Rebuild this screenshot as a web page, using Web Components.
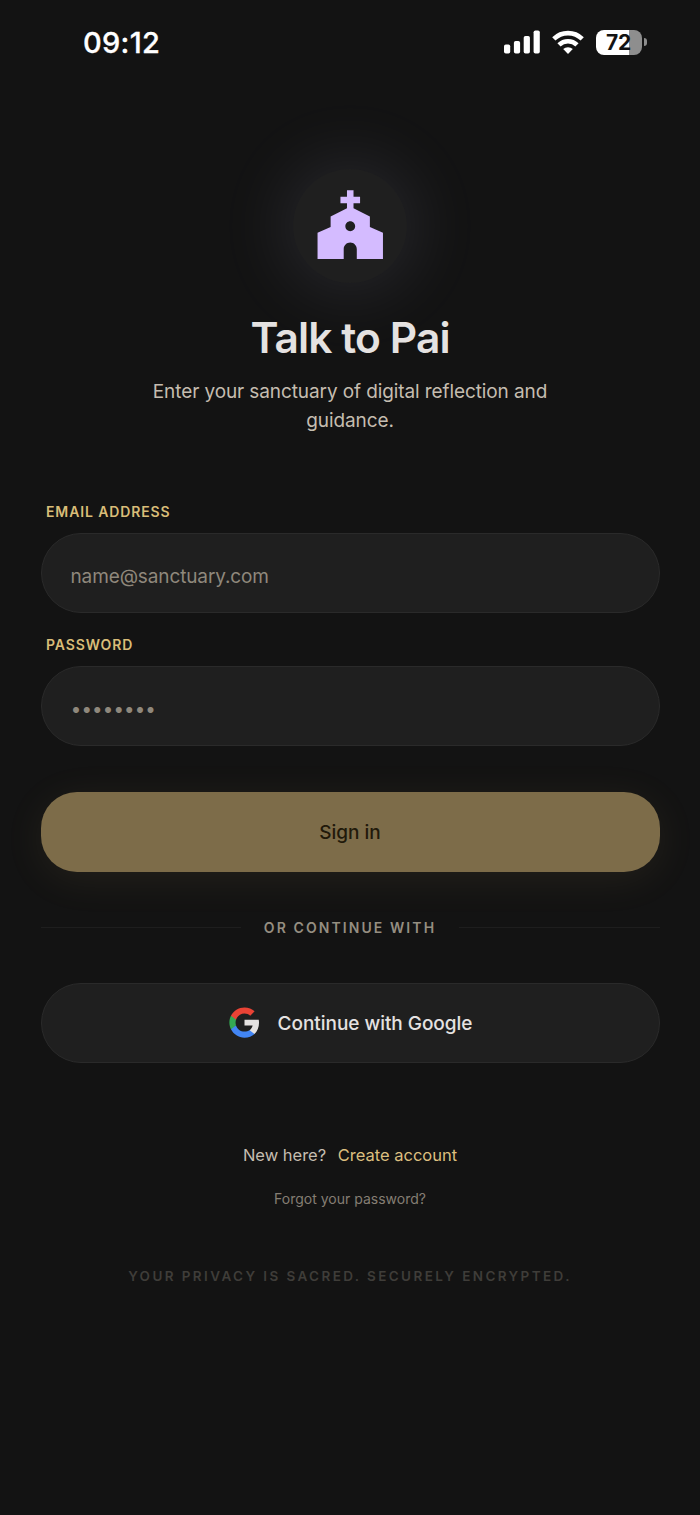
<!DOCTYPE html>
<html lang="en">
<head>
<meta charset="utf-8">
<title>Talk to Pai</title>
<style>
  html, body {
    margin: 0;
    background: #131313;
  }
</style>
</head>
<body>
<sign-in-page></sign-in-page>

<script>
class StatusBar extends HTMLElement {
  constructor() {
    super();
    this.attachShadow({ mode: 'open' });
  }

  connectedCallback() {
    const time = this.getAttribute('time') || '';
    const battery = this.getAttribute('battery') || '100';

    this.shadowRoot.innerHTML = `
      <style>
        :host {
          display: flex;
          justify-content: space-between;
          align-items: center;
          height: 84px;
          padding: 0 53px 0 83px;
          box-sizing: border-box;
          color: #fff;
        }
        .time {
          font-size: 29px;
          font-weight: 500;
          -webkit-text-stroke: 0.3px #fff;
          letter-spacing: 0.3px;
        }
        .icons {
          display: flex;
          align-items: center;
          gap: 12px;
        }
        svg {
          display: block;
        }
        .battery {
          display: flex;
          align-items: center;
          gap: 2px;
        }
        .cell {
          width: 46px;
          height: 25px;
          border-radius: 8px;
          background: linear-gradient(to right, #fff 72%, #8e8e8e 72%);
          color: #131313;
          font-size: 21px;
          font-weight: 700;
          line-height: 25px;
          text-align: center;
          text-indent: -1px;
          letter-spacing: -0.3px;
        }
        .cap {
          width: 3px;
          height: 8px;
          border-radius: 0 3px 3px 0;
          background: #8e8e8e;
        }
      </style>
      <div class="time">${time}</div>
      <div class="icons">
        <svg width="36" height="24" viewBox="0 0 36 24" fill="#fff">
          <rect x="0" y="14.5" width="6.2" height="9" rx="1.8"/>
          <rect x="9.9" y="11" width="6.2" height="12.5" rx="1.8"/>
          <rect x="19.7" y="6" width="6.2" height="17.5" rx="1.8"/>
          <rect x="29.6" y="0.5" width="6.2" height="23" rx="1.8"/>
        </svg>
        <svg width="32" height="24" viewBox="0 0 32 24" fill="none" stroke="#fff" stroke-width="4.6">
          <path d="M1.8 8.9a20.3 20.3 0 0 1 28.4 0"/>
          <path d="M7 14.9a13 13 0 0 1 18 0"/>
          <path d="M16 24l-4.8-4.9a6.9 6.9 0 0 1 9.6 0z" fill="#fff" stroke="none"/>
        </svg>
        <div class="battery">
          <div class="cell">${battery}</div>
          <div class="cap"></div>
        </div>
      </div>
    `;
  }
}

class BrandMark extends HTMLElement {
  constructor() {
    super();
    this.attachShadow({ mode: 'open' });
    this.shadowRoot.innerHTML = `
      <style>
        :host {
          display: flex;
          align-items: center;
          justify-content: center;
          width: 114px;
          height: 114px;
          border-radius: 50%;
          background: #1f1f1f;
          box-shadow: 0 0 72px 8px rgba(205, 210, 255, 0.11);
        }
        svg {
          display: block;
        }
      </style>
      <svg width="78.5" height="78.5" viewBox="0 0 24 24" fill="#d4bbff">
        <path d="M18 12.22V9l-5-2.5V5h2V3h-2V1h-2v2H9v2h2v1.5L6 9v3.22L2 14v8h8v-3c0-1.1.9-2 2-2s2 .9 2 2v3h8v-8l-4-1.78zM12 13.5c-.83 0-1.5-.67-1.5-1.5s.67-1.5 1.5-1.5 1.5.67 1.5 1.5-.67 1.5-1.5 1.5z"/>
      </svg>
    `;
  }
}

class TextField extends HTMLElement {
  constructor() {
    super();
    this.attachShadow({ mode: 'open' });
  }

  connectedCallback() {
    const label = this.getAttribute('label') || '';
    const placeholder = this.getAttribute('placeholder') || '';

    this.shadowRoot.innerHTML = `
      <style>
        :host {
          display: block;
        }
        .label {
          padding-left: 5.5px;
          margin-bottom: 10px;
          color: #d9bd78;
          font-size: 14px;
          font-weight: 600;
          line-height: 22px;
          letter-spacing: 0.88px;
        }
        .box {
          display: flex;
          align-items: center;
          height: 80px;
          padding: var(--field-padding, 7px 29px 0);
          box-sizing: border-box;
          border: 1.5px solid #2a2a2a;
          border-radius: 40px;
          background: #1f1f1f;
          color: #8f887c;
          font-size: 19px;
          font-weight: var(--field-weight, 400);
          letter-spacing: var(--field-spacing, -0.12px);
        }
      </style>
      <div class="label">${label}</div>
      <div class="box"><span>${placeholder}</span></div>
    `;
  }
}

class PillButton extends HTMLElement {
  constructor() {
    super();
    this.attachShadow({ mode: 'open' });
    this.shadowRoot.innerHTML = `
      <style>
        :host {
          display: flex;
          align-items: center;
          justify-content: center;
          gap: 17px;
          height: 80px;
          box-sizing: border-box;
          border: 1.5px solid #2a2a2a;
          border-radius: 40px;
          background: #1f1f1f;
          color: #e5e2e1;
          font-size: 19px;
          font-weight: 500;
          letter-spacing: -0.04px;
        }
        :host([primary]) {
          border: 0;
          border-radius: 36px;
          background: #7d6c49;
          color: #21190a;
          box-shadow: 0 7px 42px rgba(230, 195, 120, 0.08);
        }
        span {
          padding-top: 1px;
        }
      </style>
      <slot name="icon"></slot>
      <span><slot></slot></span>
    `;
  }
}

class GoogleLogo extends HTMLElement {
  constructor() {
    super();
    this.attachShadow({ mode: 'open' });
    this.shadowRoot.innerHTML = `
      <style>
        :host,
        svg {
          display: block;
        }
      </style>
      <svg width="33" height="33" viewBox="0 0 24 24">
        <path fill="#e5e2e1" d="M22.56 12.25c0-.78-.07-1.53-.2-2.25H12v4.26h5.92c-.26 1.37-1.04 2.53-2.21 3.31v2.77h3.57c2.08-1.92 3.28-4.74 3.28-8.09z"/>
        <path fill="#4285f4" d="M12 23c2.97 0 5.46-.98 7.28-2.66l-3.57-2.77c-.98.66-2.23 1.06-3.71 1.06-2.86 0-5.29-1.93-6.16-4.53H2.18v2.84C3.99 20.53 7.7 23 12 23z"/>
        <path fill="#34a853" d="M5.84 14.09c-.22-.66-.35-1.36-.35-2.09s.13-1.43.35-2.09V7.07H2.18C1.43 8.55 1 10.22 1 12s.43 3.45 1.18 4.93l2.85-2.22.81-.62z"/>
        <path fill="#ea4335" d="M12 5.38c1.62 0 3.06.56 4.21 1.64l3.15-3.15C17.45 2.09 14.97 1 12 1 7.7 1 3.99 3.47 2.18 7.07l3.66 2.84c.87-2.6 3.3-4.53 6.16-4.53z"/>
      </svg>
    `;
  }
}

class LabelDivider extends HTMLElement {
  constructor() {
    super();
    this.attachShadow({ mode: 'open' });
    this.shadowRoot.innerHTML = `
      <style>
        :host {
          display: flex;
          align-items: center;
          gap: 23px;
          color: #958e81;
          font-size: 14px;
          font-weight: 600;
          line-height: 22px;
          letter-spacing: 2.08px;
        }
        .line {
          flex: 1;
          height: 1px;
          background: #1e1e1e;
        }
      </style>
      <div class="line"></div>
      <span><slot></slot></span>
      <div class="line"></div>
    `;
  }
}

class SignInPage extends HTMLElement {
  constructor() {
    super();
    this.attachShadow({ mode: 'open' });
    this.shadowRoot.innerHTML = `
      <style>
        :host {
          display: block;
          width: 700px;
          height: 1515px;
          overflow: hidden;
          background: #131313;
          font-family: Inter, "Liberation Sans", sans-serif;
        }
        header {
          display: flex;
          flex-direction: column;
          align-items: center;
          padding-top: 85px;
          text-align: center;
        }
        h1 {
          margin: 28px 0 0;
          color: #e5e2e1;
          font-size: 42.5px;
          font-weight: 600;
          line-height: 54px;
          letter-spacing: -0.9px;
        }
        header p {
          width: 420px;
          margin: 13px 0 0;
          color: #c5bdb0;
          font-size: 19px;
          line-height: 28.5px;
          letter-spacing: -0.1px;
        }
        main {
          display: flex;
          flex-direction: column;
          padding: 0 40.5px;
        }
        .email {
          margin-top: 65.6px;
        }
        .password {
          --field-spacing: 1.65px;
          --field-weight: 700;
          --field-padding: 8px 30px 0;
          margin-top: 21px;
        }
        .submit {
          margin-top: 46px;
        }
        label-divider {
          margin: 45px 0 44px;
        }
        footer {
          display: flex;
          flex-direction: column;
          align-items: center;
        }
        .signup {
          display: flex;
          gap: 11.5px;
          margin-top: 79px;
          color: #c5bdb0;
          font-size: 16.5px;
          line-height: 26px;
        }
        .signup a {
          color: #dcbf7f;
        }
        .forgot {
          margin-top: 20.5px;
          color: #857e73;
          font-size: 14px;
          line-height: 22px;
        }
        .privacy {
          margin-top: 54.5px;
          color: #3f3d39;
          font-size: 13.5px;
          font-weight: 600;
          line-height: 22px;
          letter-spacing: 2.4px;
        }
      </style>
      <status-bar time="09:12" battery="72"></status-bar>
      <header>
        <brand-mark></brand-mark>
        <h1>Talk to Pai</h1>
        <p>Enter your sanctuary of digital reflection and guidance.</p>
      </header>
      <main>
        <text-field class="email" label="EMAIL ADDRESS" placeholder="name@sanctuary.com"></text-field>
        <text-field class="password" label="PASSWORD" placeholder="••••••••"></text-field>
        <pill-button class="submit" primary>Sign in</pill-button>
        <label-divider>OR CONTINUE WITH</label-divider>
        <pill-button>
          <google-logo slot="icon"></google-logo>Continue with Google
        </pill-button>
      </main>
      <footer>
        <div class="signup"><span>New here?</span><a>Create account</a></div>
        <div class="forgot">Forgot your password?</div>
        <div class="privacy">YOUR PRIVACY IS SACRED. SECURELY ENCRYPTED.</div>
      </footer>
    `;
  }
}

customElements.define('status-bar', StatusBar);
customElements.define('brand-mark', BrandMark);
customElements.define('text-field', TextField);
customElements.define('pill-button', PillButton);
customElements.define('google-logo', GoogleLogo);
customElements.define('label-divider', LabelDivider);
customElements.define('sign-in-page', SignInPage);
</script>
</body>
</html>
